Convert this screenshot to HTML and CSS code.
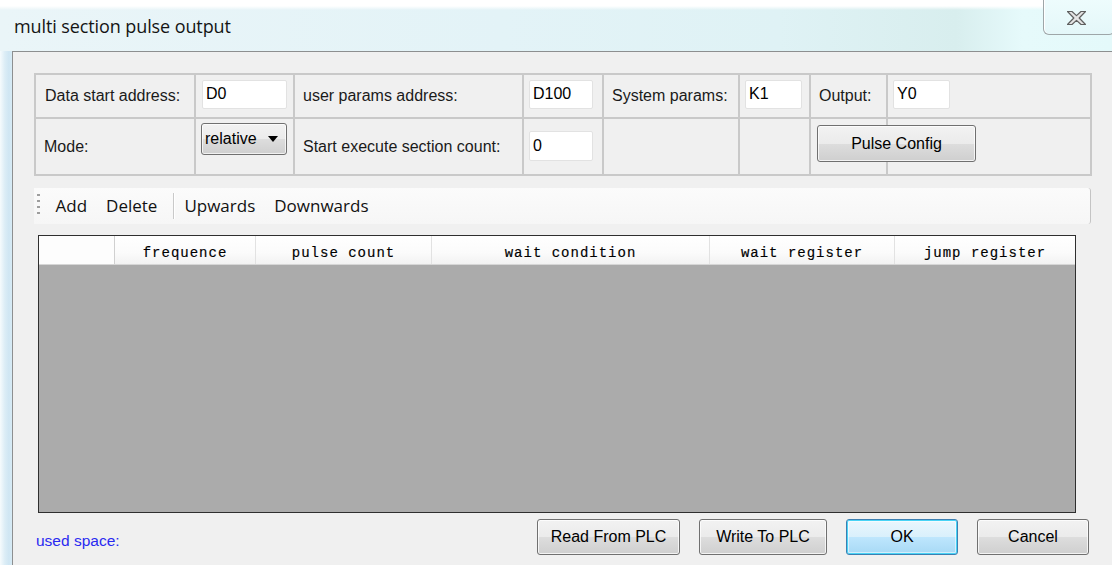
FILE: index.html
```html
<!DOCTYPE html>
<html lang="en">
<head>
<meta charset="utf-8">
<title>multi section pulse output</title>
<link rel="stylesheet" href="styles.css">
</head>
<body>
<div class="window">
  <div class="titlebar">
    <span class="title">multi section pulse output</span>
    <button class="close" type="button" aria-label="Close">
      <svg width="19" height="14" viewBox="0 0 19 14">
        <polygon points="0.5,0.5 5,0.5 9.5,4.6 14,0.5 18.5,0.5 12.2,7 18.5,13.5 14,13.5 9.5,9.4 5,13.5 0.5,13.5 6.8,7" fill="#e4e4e4" stroke="#5f5f5f" stroke-width="1.2" stroke-linejoin="round"/>
      </svg>
    </button>
  </div>
  <div class="frame">
    <div class="edge"></div>
    <div class="client">
      <div class="params">
        <div class="cell label">Data start address:</div>
        <div class="cell field"><input class="text w85" value="D0"></div>
        <div class="cell label">user params address:</div>
        <div class="cell field tight"><input class="text w64" value="D100"></div>
        <div class="cell label">System params:</div>
        <div class="cell field tight"><input class="text w57" value="K1"></div>
        <div class="cell label">Output:</div>
        <div class="cell field tight"><input class="text w57" value="Y0"></div>

        <div class="cell label">Mode:</div>
        <div class="cell field combo-cell">
          <div class="combo"><span class="combo-text">relative</span><span class="combo-arrow"></span></div>
        </div>
        <div class="cell label">Start execute section count:</div>
        <div class="cell field tight low"><input class="text w64 tall" value="0"></div>
        <div class="cell"></div>
        <div class="cell"></div>
        <div class="cell field btn-cell"><button class="btn pulse" type="button">Pulse Config</button></div>
        <div class="cell"></div>
      </div>

      <div class="toolbar">
        <span class="grip"></span>
        <span class="tool">Add</span>
        <span class="tool">Delete</span>
        <span class="tool-sep"></span>
        <span class="tool">Upwards</span>
        <span class="tool">Downwards</span>
      </div>

      <div class="grid">
        <div class="grid-head">
          <div class="hcell c0"></div>
          <div class="hcell c1">frequence</div>
          <div class="hcell c2">pulse count</div>
          <div class="hcell c3">wait condition</div>
          <div class="hcell c4">wait register</div>
          <div class="hcell c5">jump register</div>
        </div>
        <div class="grid-body"></div>
      </div>

      <div class="footer">
        <span class="used">used space:</span>
        <div class="actions">
          <button class="btn read" type="button">Read From PLC</button>
          <button class="btn write" type="button">Write To PLC</button>
          <button class="btn ok default" type="button">OK</button>
          <button class="btn cancel" type="button">Cancel</button>
        </div>
      </div>
    </div>
  </div>
</div>
</body>
</html>
```
FILE: styles.css
```css
* { box-sizing: border-box; }

html, body {
  margin: 0;
  padding: 0;
}

body {
  width: 1112px;
  height: 565px;
  overflow: hidden;
  font-family: "Liberation Sans", Arial, sans-serif;
  font-size: 16px;
  color: #000;
  background: #f0f0f0;
}

.window {
  display: flex;
  flex-direction: column;
  height: 565px;
}

/* caption bar */
.titlebar {
  height: 51px;
  flex: none;
  display: flex;
  justify-content: space-between;
  align-items: flex-start;
  background:
    linear-gradient(to bottom, #ffffff 0, #ffffff 6px, rgba(255,255,255,0) 10px),
    linear-gradient(to right, #eaf5f8 0, #e3f3f7 45%, #dff2f5 70%, #d8eeee 86%, #e6fafb 92%, #e4f9fa 100%);
}

.title {
  font-family: "Open Sans", "Noto Sans", sans-serif;
  font-size: 18px;
  color: #141414;
  padding: 14px 0 0 14px;
  letter-spacing: -0.1px;
}

.close {
  width: 72px;
  height: 36px;
  margin: -1px -3px 0 0;
  padding: 3px 5px 0 0;
  border: 1px solid #9ea6a8;
  border-top: none;
  border-radius: 0 0 6px 6px;
  background: linear-gradient(to bottom, #eefcfd, #e4f7f9);
  display: flex;
  align-items: center;
  justify-content: center;
  box-shadow: inset 1px 0 0 #ffffff;
}

.frame {
  flex: 1;
  display: flex;
  min-height: 0;
}

.edge {
  width: 12px;
  flex: none;
  background: linear-gradient(to right, #f6fbfd 0, #dcedf6 40%, #cfe6f3 75%, #d8ebf5 100%);
}

.client {
  flex: 1;
  background: #f0f0f0;
  border-top: 1px solid #8d8f90;
  border-left: 1px solid #8d8f90;
  padding: 21px 0 0 21px;
  display: flex;
  flex-direction: column;
}

/* parameter table */
.params {
  display: grid;
  grid-template-columns: 158px 97px 227px 78px 134px 69px 75px 202px;
  grid-template-rows: 42px 55px;
  gap: 2px;
  padding: 2px;
  width: 1058px;
  background: #c9c9c9;
}

.cell {
  background: #f0f0f0;
  min-width: 0;
}

.label {
  display: flex;
  align-items: center;
  padding-left: 9px;
  color: #1a1a1a;
  white-space: nowrap;
}

.params .label:nth-child(n+3) { padding-left: 8px; }

.field {
  padding: 5px 0 0 6px;
}

.field.tight { padding-left: 5px; }
.field.low { padding-top: 12px; }
.combo-cell { padding: 4px 0 0 5px; }
.btn-cell { padding: 6px 0 0 6px; }

.text {
  display: block;
  height: 29px;
  border: 1px solid #e2e2e2;
  border-radius: 2px;
  background: #ffffff;
  font-family: "Liberation Sans", Arial, sans-serif;
  font-size: 16px;
  color: #000;
  padding: 0 0 1px 3px;
  margin: 0;
  outline: none;
}

.text.tall { height: 30px; }
.w85 { width: 85px; }
.w64 { width: 64px; }
.w57 { width: 57px; }

.combo {
  width: 86px;
  height: 32px;
  border: 1px solid #707070;
  border-radius: 3px;
  background: linear-gradient(to bottom, #f2f2f2 0, #ebebeb 50%, #dddddd 51%, #cfcfcf 100%);
  box-shadow: inset 0 0 0 1px rgba(255,255,255,0.7);
  display: flex;
  align-items: center;
  overflow: hidden;
  padding: 0 0 0 3px;
}

.combo-text {
  flex: 1;
  white-space: nowrap;
  overflow: hidden;
  font-size: 16px;
}

.combo-arrow {
  width: 0;
  height: 0;
  border-left: 5px solid transparent;
  border-right: 5px solid transparent;
  border-top: 6px solid #000;
  margin: 0 8px 0 4px;
}

/* push buttons */
.btn {
  font-family: "Liberation Sans", Arial, sans-serif;
  font-size: 16px;
  color: #000;
  border: 1px solid #707070;
  border-radius: 3px;
  background: linear-gradient(to bottom, #f2f2f2 0, #ebebeb 50%, #dddddd 51%, #cfcfcf 100%);
  box-shadow: inset 0 0 0 1px rgba(255,255,255,0.75);
  padding: 0;
  margin: 0;
}

.btn.pulse {
  position: relative;
  z-index: 1;
  width: 159px;
  height: 37px;
}

.btn.default {
  border-color: #3c7fb1;
  box-shadow: inset 0 0 0 1px #48d3f6, inset 0 0 0 2px rgba(255,255,255,0.5);
  background: linear-gradient(to bottom, #eaf6fd 0, #d9f0fc 50%, #bee6fd 51%, #a7d9f5 100%);
}

/* tool strip */
.toolbar {
  margin-top: 12px;
  width: 1057px;
  height: 36px;
  display: flex;
  align-items: center;
  background: linear-gradient(to bottom, #fbfbfb, #f6f6f6);
  border-right: 1px solid #c4c4c4;
  border-radius: 0 3px 3px 0;
  padding-left: 3px;
  font-family: "Open Sans", "Noto Sans", sans-serif;
  font-size: 17px;
  color: #111;
}

.grip {
  width: 3px;
  height: 24px;
  margin-right: 6px;
  background: repeating-linear-gradient(to bottom, #9e9e9e 0, #9e9e9e 2px, transparent 2px, transparent 6px);
}

.tool {
  padding: 0 9.5px;
  line-height: 24px;
}

.tool-sep {
  width: 1px;
  height: 26px;
  background: #c9c9c9;
  box-shadow: 1px 0 0 #ffffff;
  margin: 0 1px 0 6px;
}

/* data grid */
.grid {
  margin: 11px 0 0 4px;
  width: 1038px;
  height: 278px;
  border: 1px solid #2f2f2f;
  display: flex;
  flex-direction: column;
  background: #ababab;
}

.grid-head {
  display: flex;
  height: 29px;
  flex: none;
  border-bottom: 1px solid #d6d6d6;
}

.hcell {
  height: 28px;
  padding-top: 3px;
  border-right: 1px solid #e2e2e2;
  background: linear-gradient(to bottom, #ffffff 0, #fbfbfb 60%, #f2f2f2 100%);
  font-family: "Liberation Mono", "DejaVu Sans Mono", monospace;
  font-size: 14px;
  letter-spacing: 1px;
  -webkit-text-stroke: 0.15px #000;
  text-align: center;
  line-height: 28px;
  color: #000;
  white-space: nowrap;
}

.hcell.c0 { width: 76px; background: #fdfdfd; border-right-color: #d0d0d0; }
.hcell.c1 { width: 141px; }
.hcell.c2 { width: 176px; }
.hcell.c3 { width: 278px; }
.hcell.c4 { width: 185px; }
.hcell.c5 { width: 180px; border-right: none; }

.grid-body {
  flex: 1;
  background: #ababab;
}

/* bottom row */
.footer {
  display: flex;
  align-items: center;
  width: 1055px;
  margin-top: 6px;
}

.used {
  color: #2a2af0;
  margin-left: 2px;
  padding-top: 8px;
  font-size: 15.5px;
}

.actions {
  margin-left: auto;
  display: flex;
  gap: 19px;
}

.actions .btn { height: 36px; }
.btn.read { width: 143px; }
.btn.write { width: 128px; }
.btn.ok { width: 112px; }
.btn.cancel { width: 112px; }
```
